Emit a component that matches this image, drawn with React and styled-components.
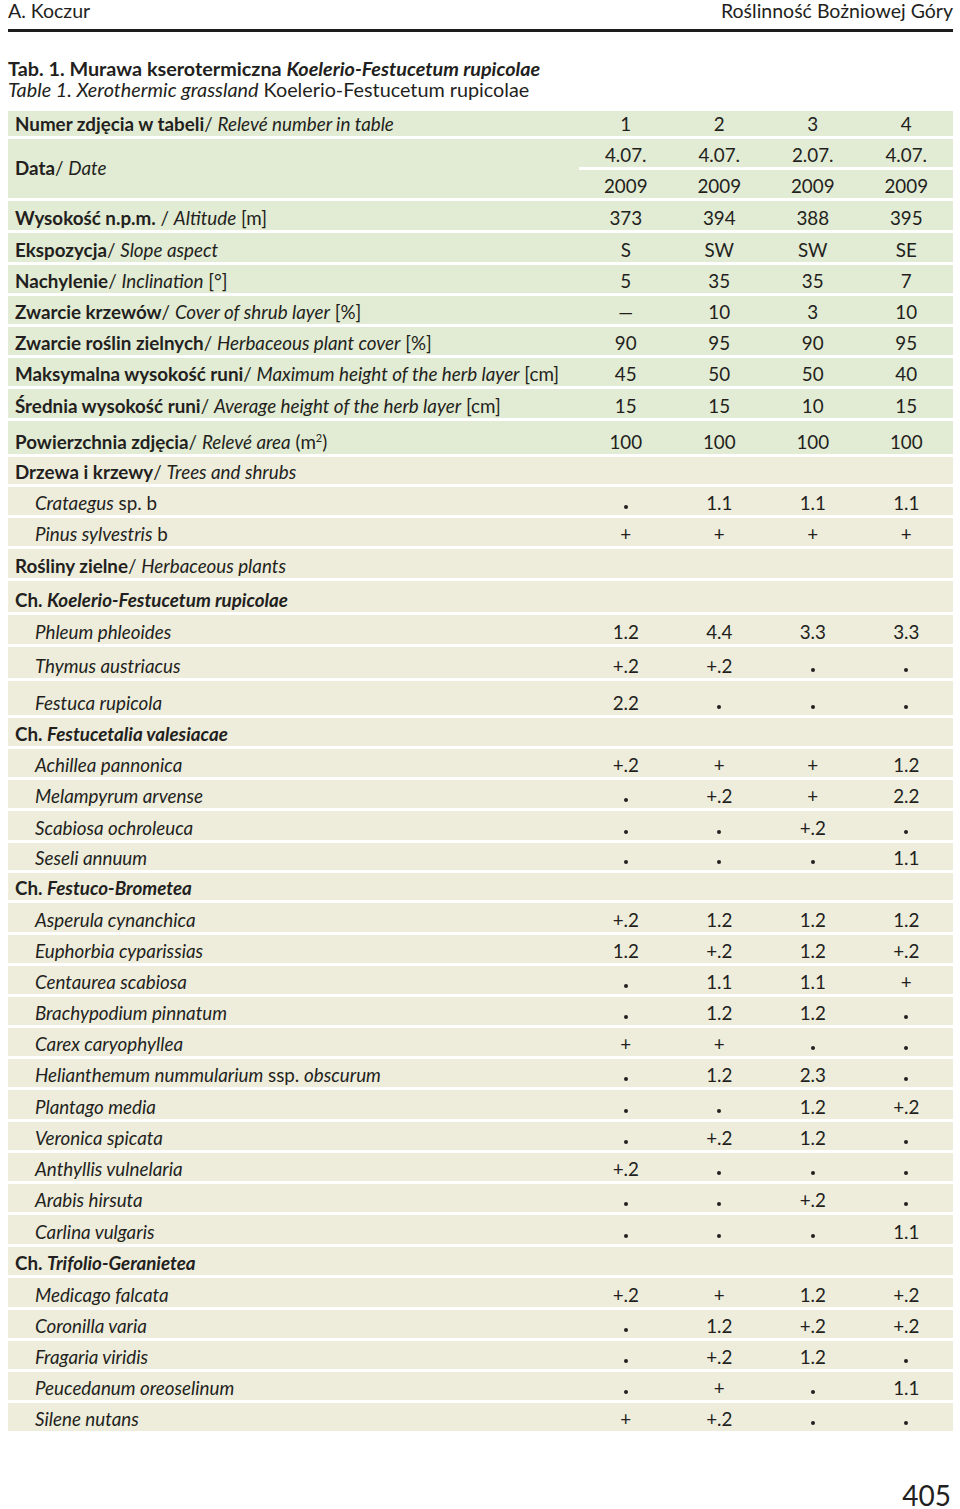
import React from "react";
import styled, { createGlobalStyle } from "styled-components";

////colors////
const green = "#e2ebd3";
const beige = "#eeeddc";
const ink = "#231f20";

const GlobalStyle = createGlobalStyle`
  body {
    margin: 0;
    background: #ffffff;
    color: ${ink};
    font-family: Lato, "Open Sans", sans-serif;
  }
`;

const Page = styled.div`
  width: 945px;
  margin-left: 8px;
`;

const Header = styled.header`
  display: flex;
  justify-content: space-between;
  align-items: flex-start;
  height: 32px;
  box-sizing: border-box;
  padding-top: 1px;
  border-bottom: 3px solid #1c1c1c;
  font-size: 19.5px;
  line-height: 19px;
`;

const Caption = styled.div`
  margin-top: 26px;
  font-size: 19.8px;
  line-height: 21px;
`;

const CaptionTitle = styled.div`
  font-weight: 700;
`;

const Table = styled.div`
  display: flex;
  flex-direction: column;
  gap: 3px;
  margin-top: 11px;
  font-size: 18.8px;
`;

const Row = styled.div`
  display: grid;
  grid-template-columns: 571px repeat(4, 1fr);
  height: ${(p) => p.$h}px;
  background: ${(p) => (p.$tone === "green" ? green : beige)};
`;

const Label = styled.div`
  display: flex;
  align-items: ${(p) => (p.$center ? "center" : "flex-end")};
  padding: 0 0 ${(p) => (p.$center ? "0" : "2px")} ${(p) => (p.$indent ? 27 : 7)}px;
  line-height: 1;
  white-space: nowrap;
`;

const Cell = styled.div`
  display: flex;
  align-items: flex-end;
  justify-content: center;
  padding-bottom: 2px;
  line-height: 1;
`;

const DateStack = styled.div`
  grid-column: 2 / span 4;
  display: flex;
  flex-direction: column;
  gap: 3px;
  background: #ffffff;
`;

const DateLine = styled.div`
  flex: 1;
  display: grid;
  grid-template-columns: repeat(4, 1fr);
  background: ${green};
`;

const Dot = styled.span`
  display: inline-block;
  width: 4px;
  height: 4px;
  border-radius: 50%;
  background: ${ink};
  margin-bottom: 4px;
`;

const B = styled.b`
  font-weight: 700;
`;

const I = styled.i`
  font-style: italic;
`;

const Sup = styled.sup`
  font-size: 11px;
  vertical-align: 7px;
  line-height: 0;
`;

const Folio = styled.div`
  text-align: right;
  margin-top: 50px;
  padding-right: 2px;
  font-size: 28px;
  line-height: 28px;
`;

const head = (bold, italic, unit, sep = "/ ") => (
  <>
    <B>{bold}</B>
    {sep}
    <I>{italic}</I>
    {unit ? ` ${unit}` : ""}
  </>
);

const ch = (name) => (
  <>
    <B>Ch. </B>
    <B>
      <I>{name}</I>
    </B>
  </>
);

const rows = [
  { h: 25, tone: "green", label: head("Numer zdjęcia w tabeli", "Relevé number in table"), v: ["1", "2", "3", "4"] },
  { h: 29, tone: "green", label: head("Wysokość n.p.m.", "Altitude", "[m]", " / "), v: ["373", "394", "388", "395"] },
  { h: 29, tone: "green", label: head("Ekspozycja", "Slope aspect"), v: ["S", "SW", "SW", "SE"] },
  { h: 28, tone: "green", label: head("Nachylenie", "Inclination", "[°]"), v: ["5", "35", "35", "7"] },
  { h: 28, tone: "green", label: head("Zwarcie krzewów", "Cover of shrub layer", "[%]"), v: ["—", "10", "3", "10"] },
  { h: 28, tone: "green", label: head("Zwarcie roślin zielnych", "Herbaceous plant cover", "[%]"), v: ["90", "95", "90", "95"] },
  { h: 28, tone: "green", label: head("Maksymalna wysokość runi", "Maximum height of the herb layer", "[cm]"), v: ["45", "50", "50", "40"] },
  { h: 29, tone: "green", label: head("Średnia wysokość runi", "Average height of the herb layer", "[cm]"), v: ["15", "15", "10", "15"] },
  {
    h: 33,
    tone: "green",
    label: (
      <>
        <B>Powierzchnia zdjęcia</B>/ <I>Relevé area</I> (m<Sup>2</Sup>)
      </>
    ),
    v: ["100", "100", "100", "100"],
  },
  { h: 27, label: head("Drzewa i krzewy", "Trees and shrubs") },
  { h: 28, sp: true, label: (<><I>Crataegus</I> sp. b</>), v: [".", "1.1", "1.1", "1.1"] },
  { h: 28, sp: true, label: (<><I>Pinus sylvestris</I> b</>), v: ["+", "+", "+", "+"] },
  { h: 29, label: head("Rośliny zielne", "Herbaceous plants") },
  { h: 31, label: ch("Koelerio-Festucetum rupicolae") },
  { h: 29, sp: true, label: "Phleum phleoides", v: ["1.2", "4.4", "3.3", "3.3"] },
  { h: 31, sp: true, label: "Thymus austriacus", v: ["+.2", "+.2", ".", "."] },
  { h: 34, sp: true, label: "Festuca rupicola", v: ["2.2", ".", ".", "."] },
  { h: 28, label: ch("Festucetalia valesiacae") },
  { h: 28, sp: true, label: "Achillea pannonica", v: ["+.2", "+", "+", "1.2"] },
  { h: 28, sp: true, label: "Melampyrum arvense", v: [".", "+.2", "+", "2.2"] },
  { h: 29, sp: true, label: "Scabiosa ochroleuca", v: [".", ".", "+.2", "."] },
  { h: 27, sp: true, label: "Seseli annuum", v: [".", ".", ".", "1.1"] },
  { h: 27, label: ch("Festuco-Brometea") },
  { h: 29, sp: true, label: "Asperula cynanchica", v: ["+.2", "1.2", "1.2", "1.2"] },
  { h: 28, sp: true, label: "Euphorbia cyparissias", v: ["1.2", "+.2", "1.2", "+.2"] },
  { h: 28, sp: true, label: "Centaurea scabiosa", v: [".", "1.1", "1.1", "+"] },
  { h: 28, sp: true, label: "Brachypodium pinnatum", v: [".", "1.2", "1.2", "."] },
  { h: 28, sp: true, label: "Carex caryophyllea", v: ["+", "+", ".", "."] },
  {
    h: 28,
    sp: true,
    label: (<><I>Helianthemum nummularium</I> ssp. <I>obscurum</I></>),
    v: [".", "1.2", "2.3", "."],
  },
  { h: 29, sp: true, label: "Plantago media", v: [".", ".", "1.2", "+.2"] },
  { h: 28, sp: true, label: "Veronica spicata", v: [".", "+.2", "1.2", "."] },
  { h: 28, sp: true, label: "Anthyllis vulnelaria", v: ["+.2", ".", ".", "."] },
  { h: 28, sp: true, label: "Arabis hirsuta", v: [".", ".", "+.2", "."] },
  { h: 29, sp: true, label: "Carlina vulgaris", v: [".", ".", ".", "1.1"] },
  { h: 28, label: ch("Trifolio-Geranietea") },
  { h: 29, sp: true, label: "Medicago falcata", v: ["+.2", "+", "1.2", "+.2"] },
  { h: 28, sp: true, label: "Coronilla varia", v: [".", "1.2", "+.2", "+.2"] },
  { h: 28, sp: true, label: "Fragaria viridis", v: [".", "+.2", "1.2", "."] },
  { h: 28, sp: true, label: "Peucedanum oreoselinum", v: [".", "+", ".", "1.1"] },
  { h: 28, sp: true, label: "Silene nutans", v: ["+", "+.2", ".", "."] },
];

const Value = ({ v }) => <Cell>{v === "." ? <Dot /> : v}</Cell>;

const TableRow = ({ row }) => (
  <Row $h={row.h} $tone={row.tone}>
    <Label $indent={row.sp}>
      <span>{row.sp && typeof row.label === "string" ? <I>{row.label}</I> : row.label}</span>
    </Label>
    {(row.v || ["", "", "", ""]).map((v, i) => (
      <Value key={i} v={v} />
    ))}
  </Row>
);

const DateRow = () => (
  <Row $h={59} $tone="green">
    <Label $center>
      <span>{head("Data", "Date")}</span>
    </Label>
    <DateStack>
      <DateLine>
        {["4.07.", "4.07.", "2.07.", "4.07."].map((d, i) => (
          <Cell key={i}>{d}</Cell>
        ))}
      </DateLine>
      <DateLine>
        {["2009", "2009", "2009", "2009"].map((d, i) => (
          <Cell key={i}>{d}</Cell>
        ))}
      </DateLine>
    </DateStack>
  </Row>
);

export default function App() {
  return (
    <>
      <GlobalStyle />
      <Page>
        <Header>
          <span>A. Koczur</span>
          <span>Roślinność Bożniowej Góry</span>
        </Header>
        <Caption>
          <CaptionTitle>
            Tab. 1. Murawa kserotermiczna <I>Koelerio-Festucetum rupicolae</I>
          </CaptionTitle>
          <div>
            <I>Table 1. Xerothermic grassland</I> Koelerio-Festucetum rupicolae
          </div>
        </Caption>
        <Table>
          <TableRow row={rows[0]} />
          <DateRow />
          {rows.slice(1).map((row, i) => (
            <TableRow key={i} row={row} />
          ))}
        </Table>
        <Folio>405</Folio>
      </Page>
    </>
  );
}
